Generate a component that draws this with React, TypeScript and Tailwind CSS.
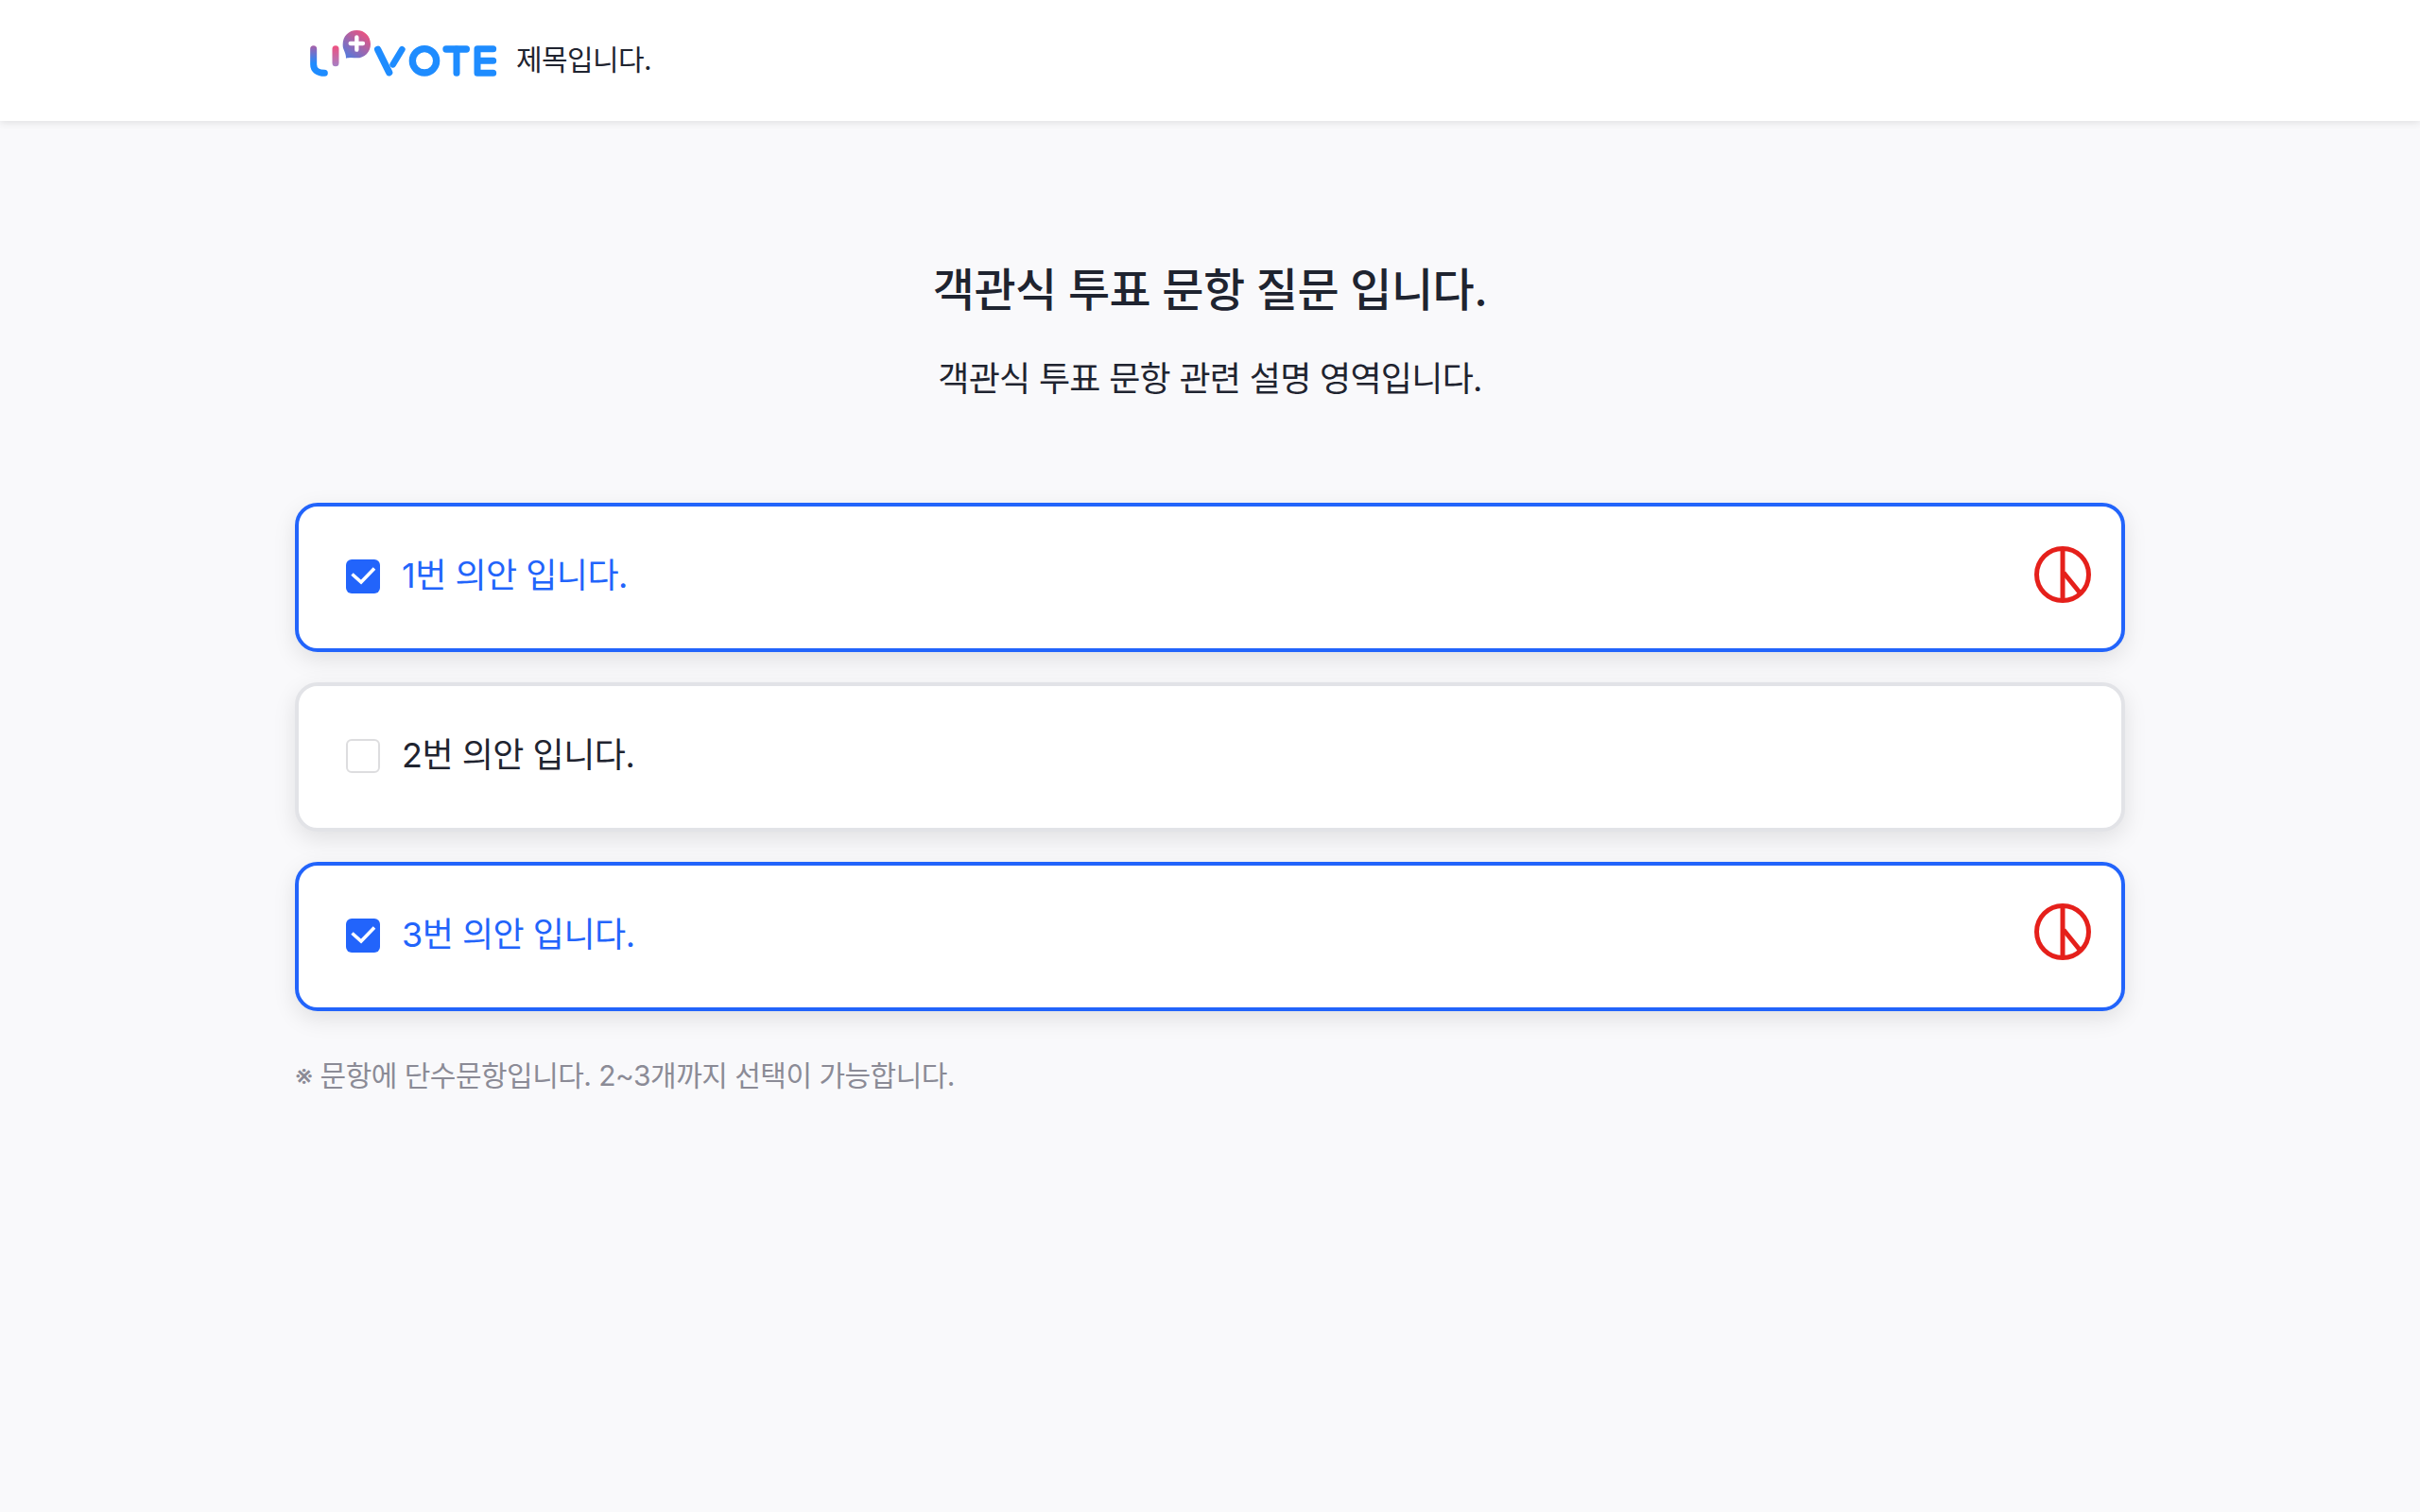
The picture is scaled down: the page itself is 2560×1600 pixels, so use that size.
const font = "font-['Inter','Noto_Sans_CJK_KR',sans-serif]";

function Logo() {
  return (
    <svg width="210" height="128" viewBox="60 0 630 384" fill="none" className="shrink-0">
      <defs>
        <linearGradient id="uGrad" x1="0" y1="145" x2="0" y2="240" gradientUnits="userSpaceOnUse">
          <stop offset="0" stopColor="#a85fa8" />
          <stop offset="0.6" stopColor="#1e8cff" />
        </linearGradient>
        <linearGradient id="stemGrad" x1="0" y1="145" x2="0" y2="210" gradientUnits="userSpaceOnUse">
          <stop offset="0" stopColor="#f0507f" />
          <stop offset="1" stopColor="#a77fc4" />
        </linearGradient>
        <linearGradient id="bubbleGrad" x1="265" y1="100" x2="205" y2="180" gradientUnits="userSpaceOnUse">
          <stop offset="0" stopColor="#f4507a" />
          <stop offset="1" stopColor="#5a78d8" />
        </linearGradient>
      </defs>
      <path d="M95 155V205C95 222 108 232 130 232" stroke="url(#uGrad)" strokeWidth="21" strokeLinecap="round" />
      <path d="M165 155V200" stroke="url(#stemGrad)" strokeWidth="21" strokeLinecap="round" />
      <path d="M232 96C257 96 276 115 276 140C276 165 257 184 232 184C222 184 214 181 198 185C199 175 194 165 190 155C188 150 188 145 188 140C188 115 207 96 232 96Z" fill="url(#bubbleGrad)" />
      <path d="M232 118V158M212 138H252" stroke="#fff" strokeWidth="13" strokeLinecap="round" />
      <path d="M299 157L335 230" stroke="#1e8cff" strokeWidth="22" strokeLinecap="round" />
      <path d="M347 205L376 157" stroke="#1e8cff" strokeWidth="20" strokeLinecap="round" />
      <circle cx="447" cy="193" r="38" stroke="#1e8cff" strokeWidth="22" />
      <path d="M516 156H580" stroke="#1e8cff" strokeWidth="22" strokeLinecap="round" />
      <path d="M549 156V232" stroke="#1e8cff" strokeWidth="21" strokeLinecap="round" />
      <path d="M665 155H615V232H665M615 193H665" stroke="#1e8cff" strokeWidth="21" strokeLinecap="round" strokeLinejoin="round" />
    </svg>
  );
}

function VoteMark({ raised }: { raised?: boolean }) {
  return (
    <svg width="60" height="60" viewBox="0 0 60 60" fill="none" className={raised ? "-mt-[10px] shrink-0" : "-mt-[6px] shrink-0"}>
      <circle cx="30" cy="30" r="27.5" stroke="#e5201b" strokeWidth="5" />
      <path d="M30 2V58" stroke="#e5201b" strokeWidth="5" />
      <path d="M31 28L48 49" stroke="#e5201b" strokeWidth="5" />
    </svg>
  );
}

function Option({ label, checked, raised }: { label: string; checked: boolean; raised?: boolean }) {
  return (
    <div
      className={
        checked
          ? "flex h-[158px] items-center justify-between rounded-3xl border-4 border-[#2264fb] bg-white pl-[50px] pr-[32px] shadow-[0_8px_24px_rgba(0,0,0,0.1)]"
          : "flex h-[158px] items-center justify-between rounded-3xl border-4 border-[#e2e3e7] bg-white pl-[50px] pr-[32px] shadow-[0_8px_24px_rgba(0,0,0,0.1)]"
      }
    >
      <div className="flex items-center gap-[23px]">
        {checked ? (
          <span className="-mt-[2px] flex h-9 w-9 items-center justify-center rounded-md bg-[#2264fb]">
            <svg width="36" height="36" viewBox="0 0 36 36" fill="none">
              <path d="M6.5 15.5L16 24L30 9.5" stroke="#fff" strokeWidth="3.6" />
            </svg>
          </span>
        ) : (
          <span className="-mt-[2px] h-9 w-9 rounded-md border-2 border-[#dddddf] bg-white" />
        )}
        <span className={checked ? "pb-1 text-[36px] leading-none tracking-[-0.5px] text-[#2264fb]" : "pb-1 text-[36px] leading-none tracking-[-0.5px] text-[#1f2430]"}>
          {label}
        </span>
      </div>
      {checked && <VoteMark raised={raised} />}
    </div>
  );
}

export default function App() {
  return (
    <div className={`min-h-[1600px] bg-[#f9f9fb] ${font}`}>
      <header className="h-[128px] bg-white shadow-[0_2px_8px_rgba(0,0,0,0.1)]">
        <div className="mx-auto flex h-full w-[1936px] items-center gap-[16px] pl-2">
          <Logo />
          <span className="pb-[2px] text-[30px] tracking-[-0.6px] text-[#1f2430]">제목입니다.</span>
        </div>
      </header>
      <main className="mx-auto w-[1936px]">
        <h1 className="mt-[143px] text-center text-[48px] leading-[72px] font-medium tracking-[-0.55px] text-[#1f2430]">
          객관식 투표 문항 질문 입니다.
        </h1>
        <p className="mt-[31px] text-center text-[36px] leading-[54px] tracking-[-0.7px] text-[#1f2430]">
          객관식 투표 문항 관련 설명 영역입니다.
        </p>
        <div className="mt-[104px] flex flex-col gap-8">
          <Option label="1번 의안 입니다." checked />
          <Option label="2번 의안 입니다." checked={false} />
          <Option label="3번 의안 입니다." checked raised />
        </div>
        <p className="mt-[46px] text-[30px] leading-[44px] tracking-[-0.52px] text-[#8b8b96]">
          ※ 문항에 단수문항입니다. 2~3개까지 선택이 가능합니다.
        </p>
      </main>
    </div>
  );
}
